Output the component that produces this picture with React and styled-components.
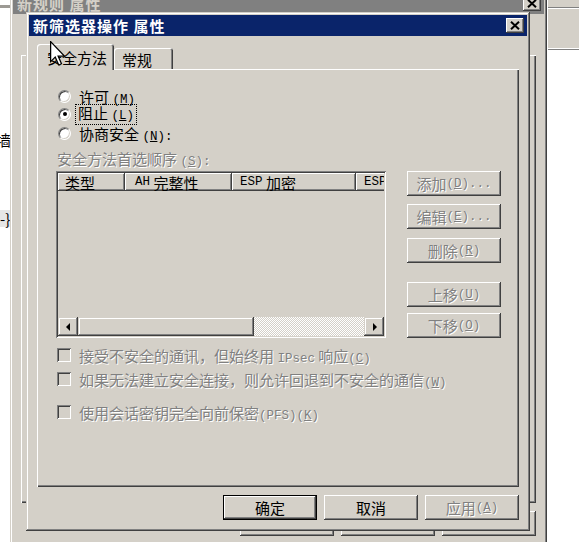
import React from 'react';
import styled, { createGlobalStyle, css } from 'styled-components';

const face = '#d4d0c8';

const GlobalStyle = createGlobalStyle`
  html, body {
    margin: 0;
    padding: 0;
    background: #fff;
  }
  body {
    font-family: "Noto Sans CJK SC", "Noto Sans", sans-serif;
    font-size: 15px;
    color: #000;
  }
`;

const raised = css`
  box-shadow: inset -1px -1px #404040, inset 1px 1px #fff, inset -2px -2px #808080, inset 2px 2px ${face};
`;

const raisedSoft = css`
  box-shadow: inset -1px -1px #404040, inset 1px 1px ${face}, inset -2px -2px #808080, inset 2px 2px #fff;
`;

const sunken = css`
  box-shadow: inset 1px 1px #808080, inset -1px -1px #fff, inset 2px 2px #404040, inset -2px -2px ${face};
`;

const defaultBevel = css`
  box-shadow: inset 0 0 0 1px #000, inset -2px -2px #404040, inset 2px 2px #fff, inset -3px -3px #808080;
`;

const disabledText = css`
  color: #808080;
  text-shadow: 1px 1px 0 #fff;
`;

const Desktop = styled.div`
  position: relative;
  width: 579px;
  height: 542px;
  overflow: hidden;
  background: #fff;
`;

/* bits of other windows peeking out behind the dialogs */
const Scrap = styled.div`
  position: absolute;
  left: ${p => p.$x}px;
  top: ${p => p.$y}px;
  font-size: 15px;
  line-height: 17px;
  white-space: nowrap;
  background: ${p => p.$bg || 'transparent'};
`;

const TopLine = styled.div`
  position: absolute;
  left: 0;
  top: 5px;
  width: 13px;
  height: 3px;
  background: #9c9a94;
`;

const SideWindow = styled.div`
  position: absolute;
  left: 548px;
  top: -10px;
  width: 40px;
  height: 60px;
  box-sizing: border-box;
  background: ${face};
  border-top: 10px solid ${face};
  box-shadow: inset 0 -1px #808080, inset 0 -2px #fff;
`;

const SideRule = styled.div`
  height: 1px;
  margin-top: 8px;
  background: #fff;
  box-shadow: 0 -1px #808080;
`;

const Window = styled.div`
  position: absolute;
  left: ${p => p.$x}px;
  top: ${p => p.$y}px;
  width: ${p => p.$w}px;
  height: ${p => p.$h}px;
  box-sizing: border-box;
  padding: 3px 3px 11px;
  background: ${face};
  ${raisedSoft}
  display: flex;
  flex-direction: column;
`;

const TitleBar = styled.div`
  flex: 0 0 21px;
  display: flex;
  align-items: center;
  justify-content: space-between;
  padding: 0 3px 0 4px;
  background: ${p => (p.$active ? '#0a246a' : '#808080')};
  color: ${p => (p.$active ? '#fff' : face)};
  font-weight: bold;
  font-size: 15px;
  letter-spacing: 1px;
  white-space: nowrap;
`;

const CaptionBtn = styled.div`
  width: 18px;
  height: 15px;
  box-sizing: border-box;
  background: ${face};
  ${raised}
  display: flex;
  align-items: center;
  justify-content: center;
`;

const CloseGlyph = () => (
  <svg width="10" height="9" viewBox="0 0 10 9">
    <path d="M1 0.8 L9 8.2 M9 0.8 L1 8.2" stroke="#000" strokeWidth="2" />
  </svg>
);

const Body = styled.div`
  flex: 1;
  display: flex;
  flex-direction: column;
  padding: 8px 8px 0;
  min-height: 0;
`;

const TabStrip = styled.div`
  flex: 0 0 25px;
  display: flex;
  align-items: flex-end;
  position: relative;
  z-index: 1;
`;

const Tab = styled.div`
  box-sizing: border-box;
  width: ${p => p.$w}px;
  height: ${p => (p.$active ? 26 : 21)}px;
  margin-bottom: ${p => (p.$active ? -1 : 0)}px;
  padding: ${p => (p.$active ? '1px 0 0 10px' : '1px 0 0 8px')};
  display: flex;
  align-items: center;
  background: ${face};
  border-radius: 3px 3px 0 0;
  box-shadow: inset 1px 1px #fff, inset -1px 0 #404040, inset -2px 0 #808080;
  white-space: nowrap;
`;

const Panel = styled.div`
  flex: 1;
  box-sizing: border-box;
  padding: 18px 17px 0 19px;
  background: ${face};
  box-shadow: inset 1px 1px #fff, inset -1px -1px #404040, inset -2px -2px #808080;
  display: flex;
  flex-direction: column;
`;

const OptionRow = styled.div`
  height: 18px;
  display: flex;
  align-items: center;
  gap: ${p => p.$gap || 8}px;
  padding-left: ${p => p.$indent || 0}px;
  margin-top: ${p => p.$mt || 0}px;
  white-space: nowrap;
  ${p => p.$disabled && disabledText}
`;

const Radio = styled.div`
  position: relative;
  flex: 0 0 auto;
  width: 13px;
  height: 13px;
  box-sizing: border-box;
  border-radius: 50%;
  background: #fff;
  border: 1px solid;
  border-color: #808080 #fff #fff #808080;
  box-shadow: inset 1px 1px #404040, inset -1px -1px ${face};

  &::after {
    content: '';
    display: ${p => (p.$checked ? 'block' : 'none')};
    position: absolute;
    left: 3.5px;
    top: 3.5px;
    width: 4px;
    height: 4px;
    border-radius: 50%;
    background: #000;
  }
`;

const Check = styled.div`
  flex: 0 0 auto;
  width: 14px;
  height: 14px;
  box-sizing: border-box;
  background: ${face};
  ${sunken}
`;

const Focus = styled.span`
  outline: 1px dotted #000;
  outline-offset: 0;
  padding: 0 2px;
  margin-left: -3px;
  line-height: 16px;
`;

const Lat = styled.span`
  font-family: "Liberation Mono", "DejaVu Sans Mono", monospace;
  font-size: 12.5px;
`;

const Key = ({ k }) => (
  <Lat>
    (<u>{k}</u>)
  </Lat>
);

const Caption = styled.div`
  height: 18px;
  line-height: 18px;
  margin-top: 8px;
  padding-left: 1px;
  white-space: nowrap;
  ${disabledText}
`;

const ListArea = styled.div`
  display: flex;
  gap: 21px;
  margin-top: 3px;
`;

const ListView = styled.div`
  width: 330px;
  height: 167px;
  box-sizing: border-box;
  padding: 2px;
  background: ${face};
  ${sunken}
  display: flex;
  flex-direction: column;
`;

const Header = styled.div`
  display: flex;
  height: 18px;
  overflow: hidden;
`;

const HeaderCell = styled.div`
  flex: 0 0 ${p => p.$w}px;
  box-sizing: border-box;
  padding-left: ${p => p.$pad || 8}px;
  display: flex;
  align-items: center;
  white-space: nowrap;
  overflow: hidden;
  box-shadow: inset -1px -1px #404040, inset 1px 1px #fff, inset -2px -2px #808080;
`;

const ListBody = styled.div`
  flex: 1;
`;

const ScrollBar = styled.div`
  height: 19px;
  display: flex;
`;

const ScrollBtn = styled.div`
  flex: 0 0 20px;
  box-sizing: border-box;
  background: ${face};
  ${raisedSoft}
  display: flex;
  align-items: center;
  justify-content: center;
`;

const Arrow = styled.div`
  width: 0;
  height: 0;
  border-top: 4px solid transparent;
  border-bottom: 4px solid transparent;
  ${p => (p.$dir === 'left' ? 'border-right: 4px solid #000;' : 'border-left: 4px solid #000;')}
  margin-left: ${p => (p.$dir === 'left' ? -1 : 1)}px;
`;

const Thumb = styled.div`
  flex: 0 0 176px;
  box-sizing: border-box;
  background: ${face};
  ${raisedSoft}
`;

const Track = styled.div`
  flex: 1;
  background: repeating-conic-gradient(#fff 0 25%, ${face} 0 50%) 0 0 / 2px 2px;
`;

const SideButtons = styled.div`
  display: flex;
  flex-direction: column;
`;

const Btn = styled.div`
  box-sizing: border-box;
  width: 94px;
  height: 25px;
  margin-top: ${p => p.$mt || 0}px;
  display: flex;
  align-items: center;
  justify-content: center;
  background: ${face};
  white-space: nowrap;
  ${p => (p.$default ? defaultBevel : raised)}
  ${p => p.$disabled && disabledText}
`;

const ButtonRow = styled.div`
  flex: 0 0 25px;
  display: flex;
  justify-content: flex-end;
  gap: 7px;
  margin-top: 8px;
`;

const BackPanel = styled(Panel)`
  margin-top: 33px;
`;

const Cursor = styled.svg`
  position: absolute;
  z-index: 10;
  left: 50px;
  top: 41px;
`;

export default function App() {
  return (
    <>
      <GlobalStyle />
      <Desktop>
        <TopLine />
        <Scrap $x={-4} $y={131}>墙</Scrap>
        <Scrap $x={0} $y={210} $bg="#e6e6e6">-}</Scrap>
        <SideWindow>
          <SideRule />
        </SideWindow>

        <Window $x={10} $y={-10} $w={537} $h={557}>
          <TitleBar>
            <span>新规则 属性</span>
            <CaptionBtn>
              <CloseGlyph />
            </CaptionBtn>
          </TitleBar>
          <Body>
            <BackPanel />
            <ButtonRow>
              <Btn />
              <Btn />
              <Btn />
            </ButtonRow>
          </Body>
        </Window>

        <Window $x={26} $y={12} $w={504} $h={519}>
          <TitleBar $active>
            <span>新筛选器操作 属性</span>
            <CaptionBtn>
              <CloseGlyph />
            </CaptionBtn>
          </TitleBar>
          <Body>
            <TabStrip>
              <Tab $active $w={77}>安全方法</Tab>
              <Tab $w={59}>常规</Tab>
            </TabStrip>
            <Panel>
              <OptionRow $indent={2}>
                <Radio />
                <span>许可 <Key k="M" /></span>
              </OptionRow>
              <OptionRow $indent={2}>
                <Radio $checked />
                <Focus>阻止 <Key k="L" /></Focus>
              </OptionRow>
              <OptionRow $indent={2} $mt={1}>
                <Radio />
                <span>协商安全 <Key k="N" /><Lat>:</Lat></span>
              </OptionRow>
              <Caption>
                安全方法首选顺序 <Key k="S" /><Lat>:</Lat>
              </Caption>
              <ListArea>
                <ListView>
                  <Header>
                    <HeaderCell $w={67} $pad={7}>类型</HeaderCell>
                    <HeaderCell $w={107} $pad={10}><Lat>AH</Lat>&nbsp;完整性</HeaderCell>
                    <HeaderCell $w={124}><Lat>ESP</Lat>&nbsp;加密</HeaderCell>
                    <HeaderCell $w={60}><Lat>ESP</Lat>&nbsp;完整性</HeaderCell>
                  </Header>
                  <ListBody />
                  <ScrollBar>
                    <ScrollBtn>
                      <Arrow $dir="left" />
                    </ScrollBtn>
                    <Thumb />
                    <Track />
                    <ScrollBtn>
                      <Arrow $dir="right" />
                    </ScrollBtn>
                  </ScrollBar>
                </ListView>
                <SideButtons>
                  <Btn $disabled>添加 <Key k="D" /><Lat>...</Lat></Btn>
                  <Btn $disabled $mt={8}>编辑 <Key k="E" /><Lat>...</Lat></Btn>
                  <Btn $disabled $mt={9}>删除 <Key k="R" /></Btn>
                  <Btn $disabled $mt={19}>上移 <Key k="U" /></Btn>
                  <Btn $disabled $mt={6}>下移 <Key k="O" /></Btn>
                </SideButtons>
              </ListArea>
              <OptionRow $disabled $gap={8} $indent={1} $mt={8}>
                <Check />
                <span>接受不安全的通讯，但始终用 <Lat>IPsec</Lat> 响应<Key k="C" /></span>
              </OptionRow>
              <OptionRow $disabled $gap={8} $indent={1} $mt={6}>
                <Check />
                <span>如果无法建立安全连接，则允许回退到不安全的通信<Key k="W" /></span>
              </OptionRow>
              <OptionRow $disabled $gap={8} $indent={1} $mt={15}>
                <Check />
                <span>使用会话密钥完全向前保密<Lat>(PFS)</Lat><Key k="K" /></span>
              </OptionRow>
            </Panel>
            <ButtonRow>
              <Btn $default>确定</Btn>
              <Btn>取消</Btn>
              <Btn $disabled>应用 <Key k="A" /></Btn>
            </ButtonRow>
          </Body>
        </Window>

        <Cursor width="15" height="25" viewBox="0 0 12 20">
          <path
            d="M0.5 0.5 L0.5 16.5 L4.2 12.9 L7 19.2 L9.2 18.2 L6.5 12 L11.5 12 Z"
            fill="#fff"
            stroke="#000"
            strokeWidth="1"
            strokeLinejoin="miter"
          />
        </Cursor>
      </Desktop>
    </>
  );
}
